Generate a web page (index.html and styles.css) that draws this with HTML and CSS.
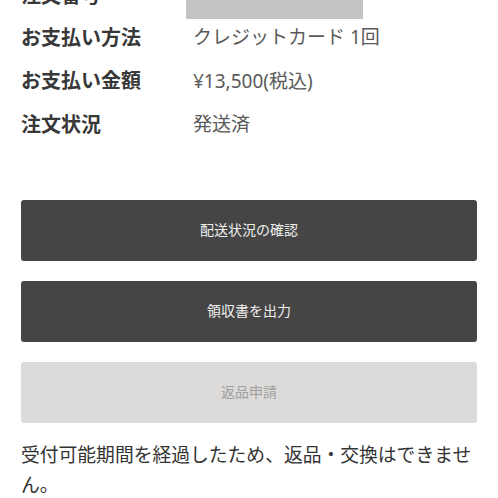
FILE: index.html
```html
<html>
<head>
<meta charset="utf-8">
<link rel="stylesheet" href="styles.css">
</head>
<body>
  <div class="orderInfo">
    <div class="row">
      <div class="label">注文番号</div>
      <div class="value"><span class="masked"></span></div>
    </div>
    <div class="row">
      <div class="label">お支払い方法</div>
      <div class="value">クレジットカード 1回</div>
    </div>
    <div class="row">
      <div class="label">お支払い金額</div>
      <div class="value">¥13,500(税込)</div>
    </div>
    <div class="row">
      <div class="label">注文状況</div>
      <div class="value">発送済</div>
    </div>
  </div>

  <div class="actions">
    <a class="btn">配送状況の確認</a>
    <a class="btn">領収書を出力</a>
    <a class="btn disabled">返品申請</a>
  </div>

  <p class="notice">受付可能期間を経過したため、返品・交換はできません。</p>
</body>
</html>
```

FILE: styles.css
```css
body {
  margin: 0;
  background: #fff;
  font-family: "Noto Sans", "Noto Sans CJK JP", sans-serif;
  color: #333;
  overflow: hidden;
}

.orderInfo {
  margin-top: -29px;
  padding: 0 21px;
}

.row {
  display: grid;
  grid-template-columns: 172px 1fr;
  align-items: center;
  height: 43.5px;
}

.label {
  font-size: 20px;
  font-weight: bold;
  color: #383838;
}

.value {
  font-size: 19px;
  color: #5a5a5a;
  align-self: stretch;
  display: flex;
  align-items: center;
}

.masked {
  display: block;
  width: 177px;
  height: 40px;
  margin-left: -7px;
  margin-top: 7.5px;
  align-self: flex-start;
  background: #c3c3c3;
}

.actions {
  display: flex;
  flex-direction: column;
  gap: 20px;
  margin: 55px 21px 0 21px;
}

.btn {
  display: flex;
  align-items: center;
  justify-content: center;
  height: 61px;
  padding-bottom: 4px;
  box-sizing: border-box;
  border-radius: 3px;
  background: #454545;
  color: #eee;
  font-size: 14px;
}

.btn.disabled {
  background: #dcdbda;
  color: #a0a0a0;
}

.notice {
  margin: 17px 21px 0 21px;
  font-size: 18.8px;
  line-height: 30px;
  color: #333;
}
```
